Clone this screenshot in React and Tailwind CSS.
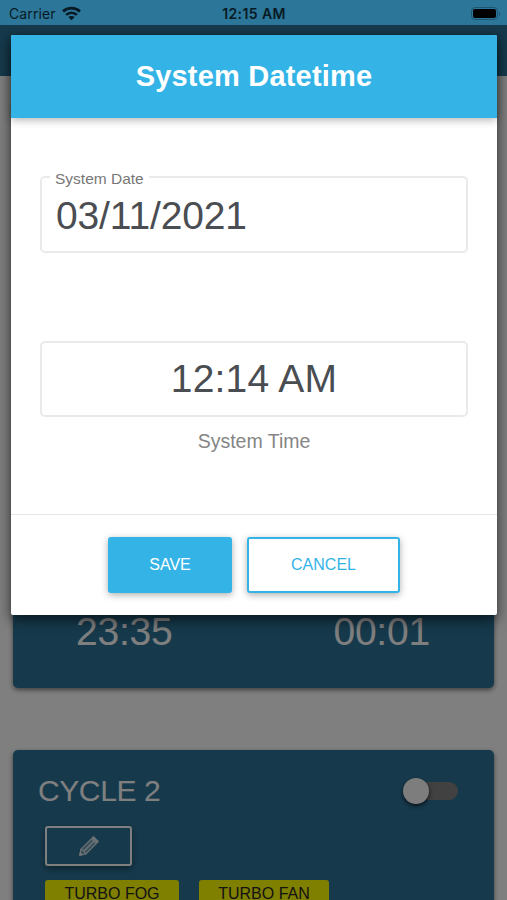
import React, { useState } from "react";

const WifiIcon = () => (
  <svg width="19" height="15" viewBox="0 0 19 15" fill="none" stroke="#071a24" strokeWidth="2.7">
    <path d="M1 5.4C5.7 0.9 13.3 0.9 18 5.4" />
    <path d="M4.1 8.9C7.1 6 11.9 6 14.9 8.9" />
    <path d="M9.5 14.2L6.3 11.1C8 9.5 11 9.5 12.7 11.1Z" fill="#071a24" stroke="none" />
  </svg>
);

const PencilIcon = () => (
  <svg width="20" height="20" viewBox="0 0 20 20" fill="none" stroke="#dce5ea" strokeWidth="1.2" strokeLinejoin="round">
    <path d="M0.8 19.2L2 13.2L12.4 2.8L17.2 7.6L6.8 18Z" fill="white" fillOpacity="0.3" />
    <path d="M5 15L14.8 5.2" strokeWidth="1.6" />
    <path d="M2 13.2L5 15L6.8 18" />
    <path d="M13.2 2L14.6 0.8L19.2 5.4L18 6.8Z" fill="#dce5ea" />
    <path d="M0.8 19.2L1.4 16.9L3.1 18.6Z" fill="#dce5ea" />
  </svg>
);

const StatusBar = () => (
  <div className="relative z-20 grid h-[25px] shrink-0 grid-cols-3 items-center bg-[#2c7699] pt-[2px] font-['Inter',sans-serif] text-[#071a24]">
    <div className="flex items-center gap-[6px] pl-[9px]">
      <span className="text-[14px] tracking-[0.1px]">Carrier</span>
      <WifiIcon />
    </div>
    <span className="pl-[1px] text-center text-[14px] font-semibold tracking-[0.4px]">12:15 AM</span>
    <div className="flex items-center justify-end pr-[7px]">
      <div className="h-[13px] w-[27px] rounded-[4px] border border-[#1d5672] p-[1px]">
        <div className="h-full w-full rounded-[2px] bg-black" />
      </div>
      <div className="ml-[1px] h-[4px] w-[1px] rounded-r bg-[#1d5672]" />
    </div>
  </div>
);

const Toggle = ({ on, setOn }) => (
  <button onClick={() => setOn(!on)} className="flex h-[26px] w-[55px] items-center">
    <span className="size-[26px] shrink-0 rounded-full bg-[#fafafa] shadow-[0_2px_4px_rgba(0,0,0,0.7)]" />
    <span className="-z-10 -ml-[14px] h-[18px] w-[43px] rounded-r-full bg-[#828282]" />
  </button>
);

const CycleCard = () => {
  const [on, setOn] = useState(false);
  return (
    <div className="isolate mx-[13px] mt-[62px] h-[200px] shrink-0 rounded-[5px] bg-[#2d7499] text-white shadow-[0_2px_5px_rgba(0,0,0,0.5)]">
      <div className="flex h-[76px] items-center justify-between pt-[6px] pr-[36px] pl-[25px]">
        <h2 className="-mt-[2px] text-[30px] tracking-[-0.4px]">CYCLE 2</h2>
        <Toggle on={on} setOn={setOn} />
      </div>
      <button className="ml-[32px] flex h-[40px] w-[87px] items-center justify-center rounded-[3px] border-[2px] border-white shadow-[0_3px_7px_rgba(0,0,0,0.4)]">
        <PencilIcon />
      </button>
      <div className="mt-[14px] ml-[32px] flex gap-[20px] text-[16px] text-[#282828]">
        <span className="flex h-[32px] w-[134px] justify-center rounded-[3px] bg-[#ffff00] pt-[2px]">TURBO FOG</span>
        <span className="flex h-[32px] w-[130px] justify-center rounded-[3px] bg-[#ffff00] pt-[2px]">TURBO FAN</span>
      </div>
    </div>
  );
};

const DatetimeModal = () => (
  <div className="absolute top-[35px] left-[11px] z-30 flex h-[580px] w-[486px] flex-col rounded-[2px] bg-white shadow-[0_5px_14px_rgba(0,0,0,0.6)]">
    <div className="flex h-[83px] shrink-0 items-center justify-center rounded-t-[2px] bg-[#34b4e6] pt-[1px] shadow-[0_2px_8px_rgba(0,0,0,0.3)]">
      <h1 className="text-[29px] font-bold tracking-[0.2px] text-white">System Datetime</h1>
    </div>
    <div className="flex flex-1 flex-col px-[29px]">
      {/* Date */}
      <fieldset className="mt-[47px] h-[88px] rounded-[5px] border-2 border-[#e9eaea] px-[8px]">
        <legend className="px-[5px] text-[15.5px] leading-[24px] text-[#777777]">
          <span className="relative top-[2px]">System Date</span>
        </legend>
        <div className="pl-[6px] text-[39px] leading-[53px] tracking-[-0.15px] text-[#4a4d51]">03/11/2021</div>
      </fieldset>
      {/* Time */}
      <div className="mt-[88px] flex h-[76px] items-center justify-center rounded-[5px] border-2 border-[#e9eaea] text-[39px] tracking-[0.2px] text-[#4a4d51]">
        12:14 AM
      </div>
      <p className="mt-[10px] text-center text-[19.5px] text-[#858585]">System Time</p>
    </div>
    <div className="flex h-[101px] shrink-0 justify-center gap-[15px] border-t border-[#e4e5e6] pt-[22px] text-[16px]">
      <button className="h-[56px] w-[124px] rounded-[3px] bg-[#34b4e6] text-white shadow-[0_2px_7px_rgba(0,0,0,0.32)]">SAVE</button>
      <button className="h-[56px] w-[153px] rounded-[3px] border-[2px] border-[#34b4e6] bg-white text-[#34b4e6] shadow-[0_2px_7px_rgba(0,0,0,0.32)]">CANCEL</button>
    </div>
  </div>
);

const App = () => {
  return (
    <div className="relative flex h-[900px] w-[507px] flex-col overflow-hidden bg-white font-['Liberation_Sans',Arial,sans-serif]">
      <StatusBar />
      <div className="h-[51px] shrink-0 bg-[#2d7499]" />
      <div className="mx-[13px] mt-[24px] flex h-[588px] shrink-0 items-end rounded-[5px] bg-[#2d7499] pb-[27px] text-[39px] tracking-[-0.2px] text-white shadow-[0_2px_5px_rgba(0,0,0,0.5)]">
        <span className="pl-[63px]">23:35</span>
        <span className="ml-auto pr-[64px]">00:01</span>
      </div>
      <CycleCard />
      {/* Backdrop */}
      <div className="absolute inset-0 z-10 bg-black/50" />
      <DatetimeModal />
    </div>
  );
};

export default App;
